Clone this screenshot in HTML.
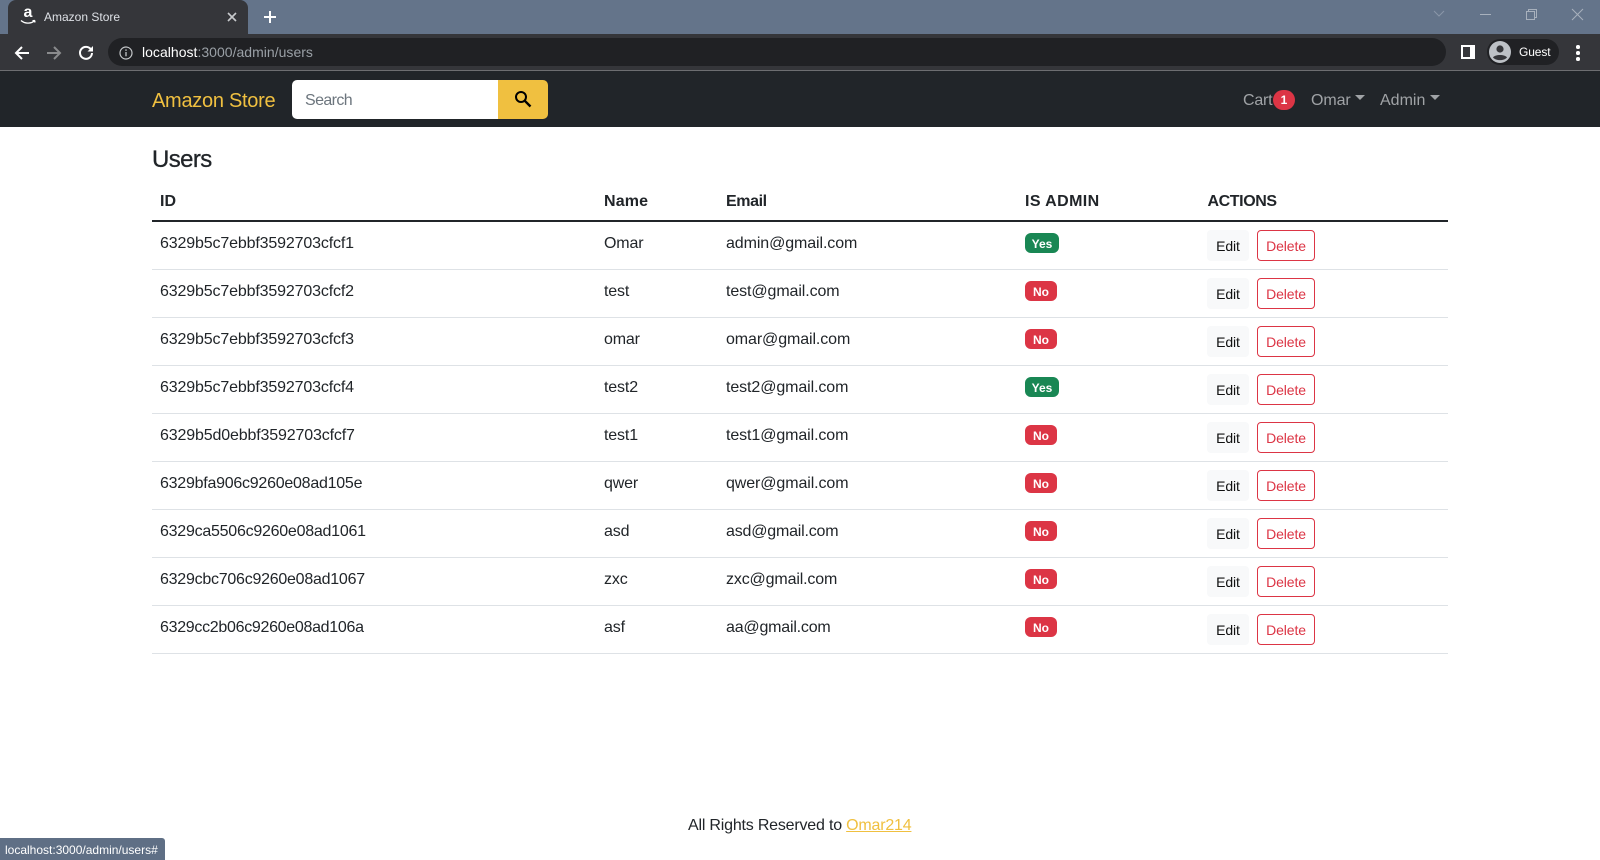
<!DOCTYPE html>
<html lang="en"><head><meta charset="utf-8"><title>Amazon Store</title>
<style>
html,body{margin:0;padding:0;background:#fff}
body{width:1600px;height:860px;position:relative;overflow:hidden;font-family:"Liberation Sans",sans-serif;color:#212529;font-size:16px}
.a{position:absolute;white-space:nowrap}
.r{position:absolute;left:152px;width:1296px;height:47px;border-bottom:1px solid #dee2e6}
.t{position:absolute;top:10px;line-height:24px;white-space:nowrap;letter-spacing:-.15px}
.m{letter-spacing:-.1px}
.b{position:absolute;left:873px;top:11px;height:20px;line-height:22px;border-radius:6px;color:#fff;font-weight:bold;font-size:12px;text-align:center}
.y{background:#198754;width:34px}.n{background:#dc3545;width:32px}
.e,.d{position:absolute;top:8px;height:31px;box-sizing:border-box;border-radius:4px;font-size:14px;text-align:center;letter-spacing:-.1px}
.e{left:1055px;width:42px;background:#f8f9fa;line-height:33px;color:#111}
.d{left:1105px;width:58px;border:1px solid #dc3545;color:#dc3545;line-height:31px}
.h{position:absolute;top:190px;line-height:24px;font-weight:bold;white-space:nowrap}
svg{position:absolute;display:block}
</style></head><body>
<div class="a" style="left:0;top:0;width:1600px;height:34px;background:#64748a"></div>
<div class="a" style="left:8px;top:0;width:240px;height:34px;background:#35363a;border-radius:8px 8px 0 0"></div>
<div class="a" style="left:20px;top:3px;width:16px;text-align:center;color:#fff;font-weight:bold;font-size:16px;line-height:20px">a</div>
<svg style="left:20px;top:18px" width="16" height="8" viewBox="0 0 16 8"><path d="M1 2.5C5 6 11 6 15 2.5M15 2.5l-2.5 .2M15 2.5l-.3 2" fill="none" stroke="#fff" stroke-width="1.3"/></svg>
<div class="a" style="left:44px;top:8px;line-height:18px;font-size:12px;color:#dee1e6">Amazon Store</div>
<svg style="left:226px;top:11px" width="12" height="12" viewBox="0 0 12 12"><path d="M2 2l8 8M10 2l-8 8" stroke="#c8cacd" stroke-width="1.6"/></svg>
<svg style="left:263px;top:10px" width="14" height="14" viewBox="0 0 14 14"><path d="M7 1v12M1 7h12" stroke="#fff" stroke-width="2"/></svg>
<svg style="left:1432px;top:9px" width="14" height="10" viewBox="0 0 14 10"><path d="M2 2l5 5 5-5" fill="none" stroke="#8a96a8" stroke-width="1"/></svg>
<div class="a" style="left:1480px;top:14px;width:11px;height:1px;background:#a8b1bd"></div>
<svg style="left:1525px;top:8px" width="13" height="13" viewBox="0 0 13 13"><path d="M1.5 3.5h8v8h-8zM3.5 3.5v-2h8v8h-2" fill="none" stroke="#a8b1bd" stroke-width="1"/></svg>
<svg style="left:1571px;top:8px" width="13" height="13" viewBox="0 0 13 13"><path d="M1 1l11 11M12 1L1 12" stroke="#a8b1bd" stroke-width="1"/></svg>

<div class="a" style="left:0;top:34px;width:1600px;height:36px;background:#35363a"></div>
<div class="a" style="left:0;top:70px;width:1600px;height:1px;background:#6d6e71"></div>
<svg style="left:14px;top:45px" width="16" height="16" viewBox="0 0 16 16"><path d="M15 8H2M8 2L2 8l6 6" fill="none" stroke="#fff" stroke-width="2"/></svg>
<svg style="left:46px;top:45px" width="16" height="16" viewBox="0 0 16 16"><path d="M1 8h13M8 2l6 6-6 6" fill="none" stroke="#8a8b8d" stroke-width="2"/></svg>
<svg style="left:78px;top:45px" width="16" height="16" viewBox="0 0 16 16"><path d="M13 4.5A6 6 0 1 0 14 8" fill="none" stroke="#fff" stroke-width="2"/><path d="M9.5 6.5H15V1z" fill="#fff"/></svg>
<div class="a" style="left:108px;top:38px;width:1338px;height:28px;background:#202124;border-radius:14px"></div>
<svg style="left:119px;top:46px" width="14" height="14" viewBox="0 0 14 14"><circle cx="7" cy="7" r="6" fill="none" stroke="#c4c7c9" stroke-width="1.2"/><path d="M7 6v4.2M7 3.4v1.5" stroke="#c4c7c9" stroke-width="1.3"/></svg>
<div class="a" style="left:142px;top:43px;line-height:18px;font-size:14px;color:#fff;letter-spacing:.02px">localhost<span style="color:#9aa0a6">:3000/admin/users</span></div>
<div class="a" style="left:1461px;top:45px;width:14px;height:14px;background:#fff"></div>
<div class="a" style="left:1463px;top:47px;width:7px;height:10px;background:#35363a"></div>
<div class="a" style="left:1487px;top:39px;width:72px;height:26px;background:#202124;border-radius:13px"></div>
<svg style="left:1489px;top:41px" width="22" height="22" viewBox="0 0 22 22"><circle cx="11" cy="11" r="11" fill="#bdc1c6"/><circle cx="11" cy="8" r="3.6" fill="#35363a"/><path d="M4 16.5C6 13.2 16 13.2 18 16.5 15 20 7 20 4 16.5z" fill="#35363a"/></svg>
<div class="a" style="left:1519px;top:43px;line-height:18px;font-size:12px;color:#fff;letter-spacing:-.1px">Guest</div>
<div class="a" style="left:1576px;top:45px;width:3.5px;height:3.5px;border-radius:50%;background:#fff"></div>
<div class="a" style="left:1576px;top:51px;width:3.5px;height:3.5px;border-radius:50%;background:#fff"></div>
<div class="a" style="left:1576px;top:57px;width:3.5px;height:3.5px;border-radius:50%;background:#fff"></div>

<div class="a" style="left:0;top:71px;width:1600px;height:56px;background:#212529"></div>
<div class="a" style="left:152px;top:86px;line-height:30px;font-size:20px;color:#f0c040;letter-spacing:-.28px">Amazon Store</div>
<div class="a" style="left:292px;top:80px;width:206px;height:39px;background:#fff;border-radius:5px 0 0 5px"></div>
<div class="a" style="left:305px;top:89px;line-height:24px;color:#6c757d;letter-spacing:-.6px">Search</div>
<div class="a" style="left:498px;top:80px;width:50px;height:39px;background:#f0c040;border-radius:0 5px 5px 0"></div>
<svg style="left:514px;top:90px" width="18" height="18" viewBox="0 0 18 18"><circle cx="7" cy="7" r="5" fill="none" stroke="#000" stroke-width="2"/><path d="M10.8 10.8L16.5 16.5" stroke="#000" stroke-width="2.4"/></svg>
<div class="a" style="left:1243px;top:88.5px;line-height:24px;color:#a0a3a6;letter-spacing:-.2px">Cart</div>
<div class="a" style="left:1273px;top:90px;width:22px;height:20px;line-height:20px;border-radius:10px;background:#dc3545;color:#fff;font-weight:bold;font-size:12px;text-align:center">1</div>
<div class="a" style="left:1311px;top:88.5px;line-height:24px;color:#a0a3a6;letter-spacing:-.1px">Omar</div>
<div class="a" style="left:1355px;top:95px;width:0;height:0;border:5px solid transparent;border-top-color:#a0a3a6;border-bottom:0"></div>
<div class="a" style="left:1380px;top:88.5px;line-height:24px;color:#a0a3a6;letter-spacing:0">Admin</div>
<div class="a" style="left:1430px;top:95px;width:0;height:0;border:5px solid transparent;border-top-color:#a0a3a6;border-bottom:0"></div>

<div class="a" style="left:152px;top:145px;line-height:30px;font-size:24px;letter-spacing:-.6px;-webkit-text-stroke:.3px #212529">Users</div>
<div class="h" style="left:160px">ID</div>
<div class="h" style="left:604px;letter-spacing:.15px">Name</div>
<div class="h" style="left:726px;letter-spacing:-.4px">Email</div>
<div class="h" style="left:1025px;letter-spacing:.4px">IS ADMIN</div>
<div class="h" style="left:1207.5px;letter-spacing:-.4px">ACTIONS</div>
<div class="a" style="left:152px;top:220px;width:1296px;height:2px;background:#212529"></div>

<div class="r" style="top:222px"><span class="t" style="left:8px">6329b5c7ebbf3592703cfcf1</span><span class="t" style="left:452px">Omar</span><span class="t m" style="left:574px">admin@gmail.com</span><span class="b y">Yes</span><span class="e">Edit</span><span class="d">Delete</span></div>
<div class="r" style="top:270px"><span class="t" style="left:8px">6329b5c7ebbf3592703cfcf2</span><span class="t" style="left:452px">test</span><span class="t m" style="left:574px">test@gmail.com</span><span class="b n">No</span><span class="e">Edit</span><span class="d">Delete</span></div>
<div class="r" style="top:318px"><span class="t" style="left:8px">6329b5c7ebbf3592703cfcf3</span><span class="t" style="left:452px">omar</span><span class="t m" style="left:574px">omar@gmail.com</span><span class="b n">No</span><span class="e">Edit</span><span class="d">Delete</span></div>
<div class="r" style="top:366px"><span class="t" style="left:8px">6329b5c7ebbf3592703cfcf4</span><span class="t" style="left:452px">test2</span><span class="t m" style="left:574px">test2@gmail.com</span><span class="b y">Yes</span><span class="e">Edit</span><span class="d">Delete</span></div>
<div class="r" style="top:414px"><span class="t" style="left:8px">6329b5d0ebbf3592703cfcf7</span><span class="t" style="left:452px">test1</span><span class="t m" style="left:574px">test1@gmail.com</span><span class="b n">No</span><span class="e">Edit</span><span class="d">Delete</span></div>
<div class="r" style="top:462px"><span class="t" style="left:8px;letter-spacing:-.25px">6329bfa906c9260e08ad105e</span><span class="t" style="left:452px">qwer</span><span class="t m" style="left:574px">qwer@gmail.com</span><span class="b n">No</span><span class="e">Edit</span><span class="d">Delete</span></div>
<div class="r" style="top:510px"><span class="t" style="left:8px;letter-spacing:-.25px">6329ca5506c9260e08ad1061</span><span class="t" style="left:452px">asd</span><span class="t m" style="left:574px;letter-spacing:-.2px">asd@gmail.com</span><span class="b n">No</span><span class="e">Edit</span><span class="d">Delete</span></div>
<div class="r" style="top:558px"><span class="t" style="left:8px;letter-spacing:-.25px">6329cbc706c9260e08ad1067</span><span class="t" style="left:452px">zxc</span><span class="t" style="left:574px">zxc@gmail.com</span><span class="b n">No</span><span class="e">Edit</span><span class="d">Delete</span></div>
<div class="r" style="top:606px"><span class="t" style="left:8px;letter-spacing:-.3px">6329cc2b06c9260e08ad106a</span><span class="t" style="left:452px">asf</span><span class="t m" style="left:574px;letter-spacing:-.2px">aa@gmail.com</span><span class="b n">No</span><span class="e">Edit</span><span class="d">Delete</span></div>

<div class="a" style="left:688px;top:814px;line-height:24px;letter-spacing:-.2px">All Rights Reserved to <span style="color:#f0c040;text-decoration:underline">Omar214</span></div>
<div class="a" style="left:0;top:838px;width:165px;height:22px;background:#5f6f85;border-radius:0 3px 0 0"></div>
<div class="a" style="left:5px;top:842px;line-height:17px;font-size:12px;color:#fff;letter-spacing:0">localhost:3000/admin/users#</div>
</body></html>
